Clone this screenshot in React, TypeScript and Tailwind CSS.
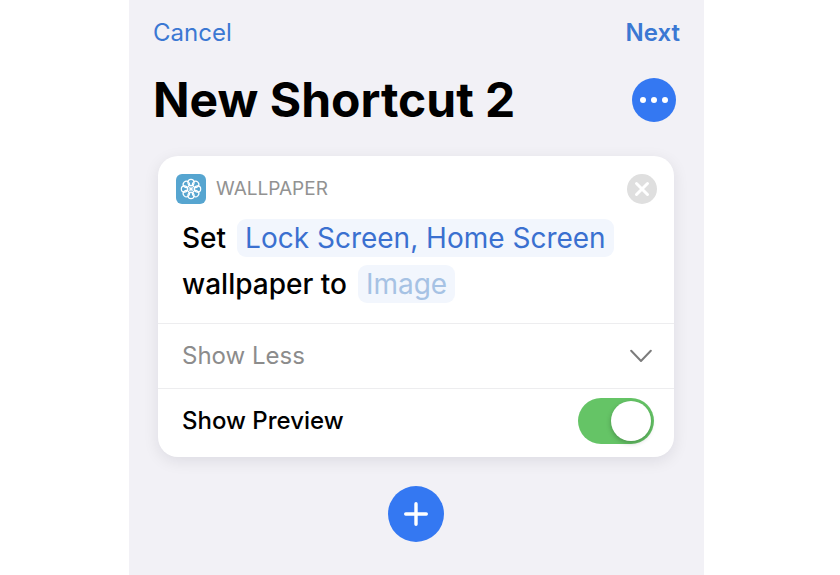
import { useState } from 'react'

const petals = [0, 45, 90, 135, 180, 225, 270, 315]

function WallpaperIcon() {
  return (
    <span className="flex size-[30px] items-center justify-center rounded-[6px] bg-[#56a5d0]">
      <svg viewBox="0 0 24 24" className="size-6" fill="none" stroke="#fff" strokeWidth="1.2" aria-hidden="true">
        {petals.map(a => (
          <g key={a} transform={`rotate(${a} 12 12)`}>
            <circle cx="12" cy="5.4" r="3.1" />
            <path d="M12 12 V8.5" strokeWidth="0.7" />
          </g>
        ))}
        <circle cx="12" cy="12" r="1.5" fill="#fff" stroke="none" />
      </svg>
    </span>
  )
}

export default function App() {
  const [preview, setPreview] = useState(true)

  return (
    <div className="flex min-h-screen justify-center bg-white pr-[7px] font-['Inter','Liberation_Sans',sans-serif]">
      <main className="w-full max-w-[575px] bg-[#f2f1f6]">
        <header className="px-6 pt-[17px]">
          <nav className="flex items-center justify-between text-2xl leading-8 text-[#3b78d3]">
            <button type="button">Cancel</button>
            <button type="button" className="font-semibold">Next</button>
          </nav>
          <div className="mt-5 flex items-center justify-between pr-1">
            <h1 className="text-5xl leading-[62px] font-bold text-black">New Shortcut 2</h1>
            <button type="button" aria-label="More options" className="flex size-11 items-center justify-center gap-[5px] rounded-full bg-[#3478f2]">
              <span className="size-[6px] rounded-full bg-white" />
              <span className="size-[6px] rounded-full bg-white" />
              <span className="size-[6px] rounded-full bg-white" />
            </button>
          </div>
        </header>

        <section className="mr-[30px] ml-[29px] mt-[25px] rounded-[20px] bg-white shadow-[0_4px_16px_rgba(0,0,30,0.09)]">
          <div className="flex items-center gap-[10px] pt-[18px] pr-[17px] pl-[18px]">
            <WallpaperIcon />
            <h2 className="flex-1 text-[19px] leading-[30px] text-[#929292]">WALLPAPER</h2>
            <button type="button" aria-label="Remove action" className="flex size-[30px] items-center justify-center rounded-full bg-[#dfdfdf]">
              <svg viewBox="0 0 30 30" className="size-[30px]" fill="none" stroke="#fff" strokeWidth="3" strokeLinecap="round" aria-hidden="true">
                <path d="M9.5 9.5 L20.5 20.5 M20.5 9.5 L9.5 20.5" />
              </svg>
            </button>
          </div>

          <div className="space-y-2 px-6 pt-[15px] pb-[20px] text-[28px] leading-[38px] text-black">
            <div className="flex items-center gap-[11px]">
              <span className="font-medium">Set</span>
              <button type="button" className="rounded-[9px] bg-[#f2f6fd] px-2 text-[#3a70d0]">Lock Screen, Home Screen</button>
            </div>
            <div className="flex items-center gap-[11px]">
              <span className="font-medium">wallpaper to</span>
              <button type="button" className="rounded-[9px] bg-[#f2f6fd] px-2 text-[#a6c2e4]">Image</button>
            </div>
          </div>

          <button type="button" className="flex h-[65px] w-full items-center justify-between border-t border-[#ededef] pr-[22px] pl-6 text-2xl text-[#8c8c8c]">
            Show Less
            <svg viewBox="0 0 22 14" className="h-[14px] w-[22px]" fill="none" stroke="#7c7c7c" strokeWidth="2" strokeLinecap="round" strokeLinejoin="round" aria-hidden="true">
              <path d="M1.2 1.8 L11 12 L20.8 1.8" />
            </svg>
          </button>

          <label className="flex items-center justify-between border-t border-[#ededef] pt-[9px] pr-5 pb-[13px] pl-6 text-2xl font-medium text-black">
            Show Preview
            <input type="checkbox" role="switch" checked={preview} onChange={e => setPreview(e.target.checked)} className="peer sr-only" />
            <span className="flex h-[46px] w-[76px] items-center rounded-full bg-[#d9d9de] px-[3px] peer-checked:justify-end peer-checked:bg-[#65c466]">
              <span className="size-10 rounded-full bg-white shadow-[0_2px_5px_rgba(0,0,0,0.25)]" />
            </span>
          </label>
        </section>

        <div className="flex justify-center pt-[29px] pr-px pb-7">
          <button type="button" aria-label="Add action" className="flex size-14 items-center justify-center rounded-full bg-[#3478f2]">
            <svg viewBox="0 0 24 24" className="size-6" fill="none" stroke="#fff" strokeWidth="3.4" strokeLinecap="round" aria-hidden="true">
              <path d="M12 1.7 V22.3 M1.7 12 H22.3" />
            </svg>
          </button>
        </div>
      </main>
    </div>
  )
}
